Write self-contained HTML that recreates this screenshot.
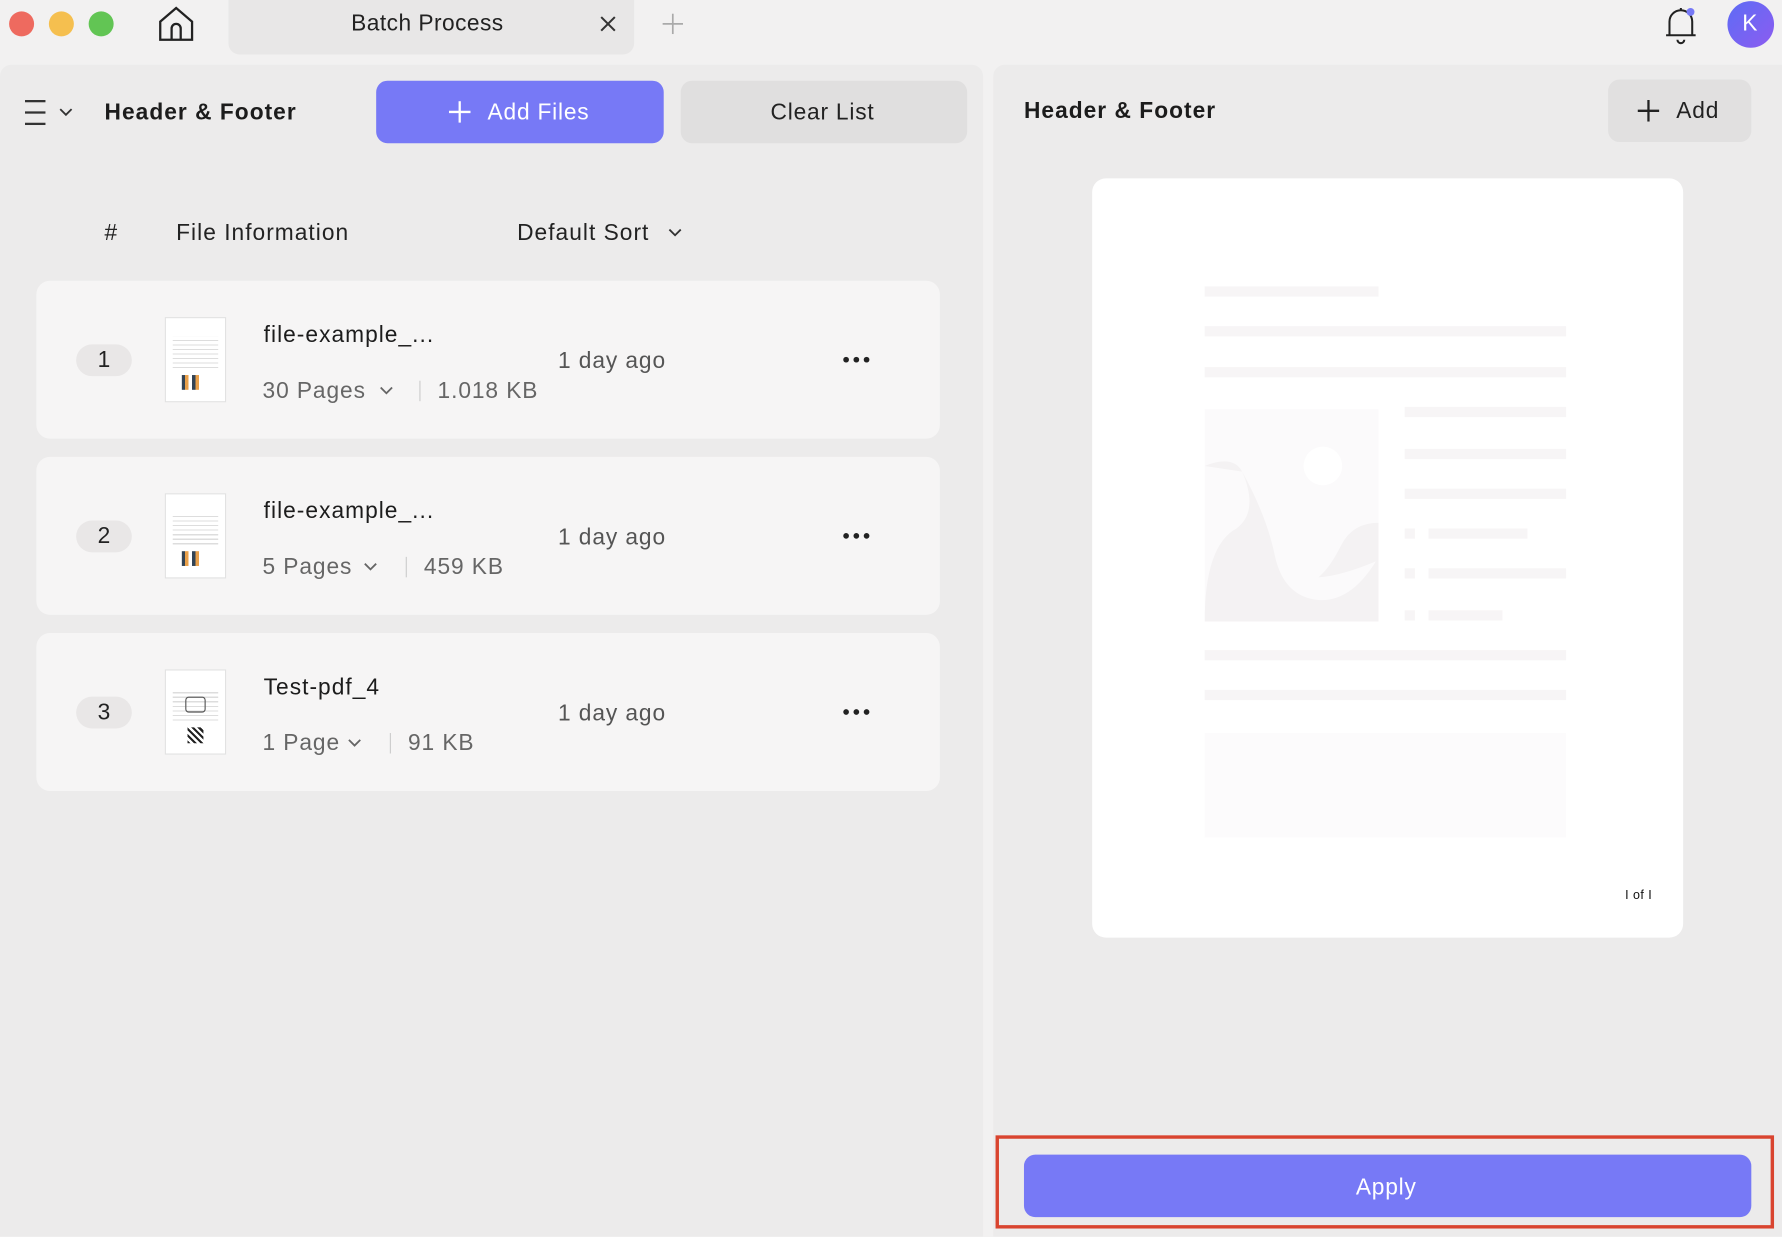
<!DOCTYPE html>
<html><head><meta charset="utf-8"><style>
*{margin:0;padding:0;box-sizing:border-box}
html,body{width:1782px;height:1236px;overflow:hidden;background:#f2f1f1;font-family:"Liberation Sans",sans-serif}
#w{position:absolute;left:0;top:0;width:1568px;height:1088px;transform:scale(1.13648);transform-origin:0 0}
.a{position:absolute}
.t{position:absolute;white-space:nowrap;line-height:1;letter-spacing:0.4px}
.card{position:absolute;left:32px;width:795px;height:139px;background:#f6f5f5;border-radius:12px}
.badge{position:absolute;left:35px;top:56px;width:49px;height:28px;background:#e9e7e7;border-radius:14px;font-size:20px;color:#222;text-align:center;line-height:28px}
.th{position:absolute;left:113px;top:32px;width:54px;height:75px;background:#fff;border:1px solid #e2e2e2;background-image:repeating-linear-gradient(180deg,transparent 0 3px,#ddd 3px 4px);background-size:40px 30px;background-position:6px 16px;background-repeat:no-repeat}
.nm{left:200px;top:38px;font-size:20px;color:#1c1c1c}
.mt{top:87px;font-size:20px;color:#666}
.ago{left:459px;top:61px;font-size:20px;color:#555}
.dots{left:710px;top:67px;display:flex;line-height:0}
.dots i{display:block;width:5px;height:5px;border-radius:50%;background:#222;margin-right:4px}
.bar{position:absolute;background:#f7f5f6;height:9px}
.chev{position:absolute}
</style></head><body><div id="w">
<div class="a" style="left:8px;top:10px;width:22px;height:22px;border-radius:50%;background:#ee6a5f"></div>
<div class="a" style="left:43px;top:10px;width:22px;height:22px;border-radius:50%;background:#f5bf4f"></div>
<div class="a" style="left:78px;top:10px;width:22px;height:22px;border-radius:50%;background:#62c554"></div>
<svg class="a" style="left:138px;top:4px" width="34" height="34" viewBox="0 0 34 34" fill="none" stroke="#222" stroke-width="2"><path d="M3 15 L17 3 L31 15 V31 H3 Z"/><path d="M13 31 V21 a4 4 0 0 1 8 0 V31"/></svg>
<div class="a" style="left:201px;top:0;width:357px;height:48px;background:#e8e7e7;border-radius:0 0 10px 10px"></div>
<div class="t" style="left:309px;top:11px;font-size:20px;color:#222">Batch Process</div>
<svg class="a" style="left:528px;top:14px" width="14" height="14" viewBox="0 0 14 14" stroke="#333" stroke-width="1.8"><path d="M1 1 L13 13 M13 1 L1 13"/></svg>
<svg class="a" style="left:583px;top:12px" width="18" height="18" viewBox="0 0 18 18" stroke="#aaa" stroke-width="1.5"><path d="M9 0 V18 M0 9 H18"/></svg>
<svg class="a" style="left:1463px;top:4px" width="32" height="36" viewBox="0 0 32 36" fill="none" stroke="#222" stroke-width="1.8"><path d="M6 27 V15 a10 10 0 0 1 20 0 V27 H3 H29"/><path d="M13 31 a3 3 0 0 0 6 0"/><path d="M16 5 V3"/></svg>
<div class="a" style="left:1484px;top:7px;width:7px;height:7px;border-radius:50%;background:#7779f6"></div>
<div class="a" style="left:1520px;top:1px;width:41px;height:41px;border-radius:50%;background:linear-gradient(135deg,#5d6cf5,#8c5cf0)"></div>
<div class="t" style="left:1533px;top:11px;font-size:20px;color:#fff">K</div>
<div class="a" style="left:0;top:57px;width:865px;height:1031px;background:#ecebeb;border-radius:10px 10px 0 0"></div>
<div class="a" style="left:22px;top:88px;width:18px;height:2px;background:#333"></div>
<div class="a" style="left:22px;top:98px;width:18px;height:2px;background:#333"></div>
<div class="a" style="left:22px;top:108px;width:18px;height:2px;background:#333"></div>
<svg class="a" style="left:52px;top:95px" width="12" height="8" viewBox="0 0 12 8" fill="none" stroke="#333" stroke-width="1.6"><path d="M1 1 L6 6 L11 1"/></svg>
<div class="t" style="left:92px;top:89px;font-size:20px;font-weight:bold;color:#1c1c1c;letter-spacing:0.9px">Header &amp; Footer</div>
<div class="a" style="left:331px;top:71px;width:253px;height:55px;background:#7779f6;border-radius:10px"></div>
<svg class="a" style="left:395px;top:89px" width="19" height="19" viewBox="0 0 19 19" stroke="#fff" stroke-width="2"><path d="M9.5 0 V19 M0 9.5 H19"/></svg>
<div class="t" style="left:429px;top:89px;font-size:20px;color:#fff;letter-spacing:0.7px">Add Files</div>
<div class="a" style="left:599px;top:71px;width:252px;height:55px;background:#e0dfdf;border-radius:10px"></div>
<div class="t" style="left:678px;top:89px;font-size:20px;color:#222;letter-spacing:0.7px">Clear List</div>
<div class="t" style="left:92px;top:195px;font-size:20px;color:#222">#</div>
<div class="t" style="left:155px;top:195px;font-size:20px;color:#222;letter-spacing:0.9px">File Information</div>
<div class="t" style="left:455px;top:195px;font-size:20px;color:#222;letter-spacing:0.9px">Default Sort</div>
<svg class="a" style="left:588px;top:201px" width="12" height="8" viewBox="0 0 12 8" fill="none" stroke="#333" stroke-width="1.6"><path d="M1 1 L6 6 L11 1"/></svg>

<div class="card" style="top:247px"><div class="badge">1</div><div class="th"></div>
<div class="t nm" style="letter-spacing:0.9px">file-example_...</div><div class="t mt" style="left:199px;letter-spacing:0.8px">30 Pages</div>
<svg class="chev" style="left:302px;top:93px" width="12" height="8" viewBox="0 0 12 8" fill="none" stroke="#666" stroke-width="1.6"><path d="M1 1 L6 6 L11 1"/></svg>
<div class="a" style="left:337px;top:88px;width:1px;height:18px;background:#ccc"></div><div class="t mt" style="left:353px;letter-spacing:0.8px">1.018 KB</div>
<div class="t ago" style="letter-spacing:0.8px">1 day ago</div><div class="a dots"><i></i><i></i><i></i></div></div>
<div class="card" style="top:402px"><div class="badge">2</div><div class="th"></div>
<div class="t nm" style="letter-spacing:0.9px">file-example_...</div><div class="t mt" style="left:199px;letter-spacing:0.8px">5 Pages</div>
<svg class="chev" style="left:288px;top:93px" width="12" height="8" viewBox="0 0 12 8" fill="none" stroke="#666" stroke-width="1.6"><path d="M1 1 L6 6 L11 1"/></svg>
<div class="a" style="left:325px;top:88px;width:1px;height:18px;background:#ccc"></div><div class="t mt" style="left:341px;letter-spacing:0.8px">459 KB</div>
<div class="t ago" style="letter-spacing:0.8px">1 day ago</div><div class="a dots"><i></i><i></i><i></i></div></div>
<div class="card" style="top:557px"><div class="badge">3</div><div class="th"></div>
<div class="t nm" style="letter-spacing:0.9px">Test-pdf_4</div><div class="t mt" style="left:199px;letter-spacing:0.8px">1 Page</div>
<svg class="chev" style="left:274px;top:93px" width="12" height="8" viewBox="0 0 12 8" fill="none" stroke="#666" stroke-width="1.6"><path d="M1 1 L6 6 L11 1"/></svg>
<div class="a" style="left:311px;top:88px;width:1px;height:18px;background:#ccc"></div><div class="t mt" style="left:327px;letter-spacing:0.8px">91 KB</div>
<div class="t ago" style="letter-spacing:0.8px">1 day ago</div><div class="a dots"><i></i><i></i><i></i></div></div>
<div class="a" style="left:160px;top:330px;width:22px;height:13px;background:linear-gradient(90deg,#345 0 3px,#e9a04a 3px 6px,#fff 6px 9px,#345 9px 12px,#e9a04a 12px 15px,#fff 15px)"></div>
<div class="a" style="left:160px;top:485px;width:22px;height:13px;background:linear-gradient(90deg,#345 0 3px,#e9a04a 3px 6px,#fff 6px 9px,#345 9px 12px,#e9a04a 12px 15px,#fff 15px)"></div>
<div class="a" style="left:163px;top:613px;width:18px;height:14px;border:1px solid #555;border-radius:3px"></div>
<div class="a" style="left:165px;top:640px;width:14px;height:14px;background:repeating-linear-gradient(45deg,#222 0 2px,#fff 2px 4px)"></div>
<div class="a" style="left:874px;top:57px;width:694px;height:1031px;background:#ecebeb;border-radius:10px 0 0 0"></div>
<div class="t" style="left:901px;top:88px;font-size:20px;font-weight:bold;color:#1c1c1c;letter-spacing:0.9px">Header &amp; Footer</div>
<div class="a" style="left:1415px;top:70px;width:126px;height:55px;background:#e1e0e0;border-radius:10px"></div>
<svg class="a" style="left:1441px;top:88px" width="19" height="19" viewBox="0 0 19 19" stroke="#222" stroke-width="2"><path d="M9.5 0 V19 M0 9.5 H19"/></svg>
<div class="t" style="left:1475px;top:88px;font-size:20px;color:#222;letter-spacing:0.7px">Add</div>
<div class="a" style="left:961px;top:157px;width:520px;height:668px;background:#fff;border-radius:12px"></div>
<div class="bar" style="left:1060px;top:252px;width:153px"></div>
<div class="bar" style="left:1060px;top:287px;width:318px"></div>
<div class="bar" style="left:1060px;top:323px;width:318px"></div>
<svg class="a" style="left:1060px;top:360px" width="153" height="187" viewBox="0 0 153 187"><rect width="153" height="187" fill="#fbfafb"/><circle cx="104" cy="50" r="17" fill="#fff"/><path d="M0 50 Q25 40 33 55 Q48 90 28 105 Q0 120 0 187 H153 V130 Q130 170 100 168 Q70 165 62 130 Q55 95 33 55" fill="#f4f2f3"/><path d="M100 148 Q120 147 153 133 V100 Q130 100 120 120 Q110 140 100 148Z" fill="#f4f2f3"/></svg>
<div class="bar" style="left:1236px;top:358px;width:142px"></div>
<div class="bar" style="left:1236px;top:395px;width:142px"></div>
<div class="bar" style="left:1236px;top:430px;width:142px"></div>
<div class="bar" style="left:1236px;top:465px;width:9px"></div><div class="bar" style="left:1257px;top:465px;width:87px"></div>
<div class="bar" style="left:1236px;top:500px;width:9px"></div><div class="bar" style="left:1257px;top:500px;width:121px"></div>
<div class="bar" style="left:1236px;top:537px;width:9px"></div><div class="bar" style="left:1257px;top:537px;width:65px"></div>
<div class="bar" style="left:1060px;top:572px;width:318px"></div>
<div class="bar" style="left:1060px;top:607px;width:318px"></div>
<div class="a" style="left:1060px;top:645px;width:318px;height:92px;background:#fcfbfc"></div>
<div class="t" style="left:1430px;top:783px;font-size:11px;color:#111">I of I</div>
<div class="a" style="left:876px;top:999px;width:685px;height:82px;border:3px solid #d9442f"></div>
<div class="a" style="left:901px;top:1016px;width:640px;height:55px;background:#7779f6;border-radius:10px"></div>
<div class="t" style="left:1193px;top:1035px;font-size:20px;color:#fff;letter-spacing:0.7px">Apply</div>
</div></body></html>
